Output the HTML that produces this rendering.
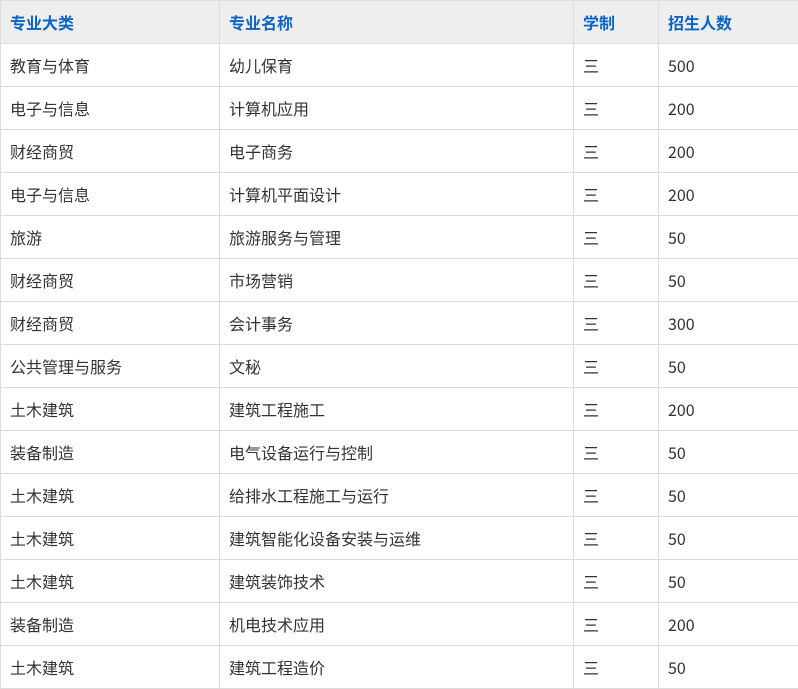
<!DOCTYPE html>
<html><head><meta charset="utf-8"><style>
body{margin:0;background:#fff;}
table{border-collapse:collapse;width:798px;table-layout:fixed;font-family:"Noto Sans CJK SC","Liberation Sans",sans-serif;font-size:16px;color:#333;}
td,th{border:1px solid #ddd;height:42px;padding:0 0 0 9px;text-align:left;vertical-align:middle;line-height:20px;}
th{background:#eee;color:#0a64c8;font-weight:bold;}
</style></head><body>
<table>
<colgroup><col style="width:219px"><col style="width:354px"><col style="width:85px"><col style="width:140px"></colgroup>
<tr><th>专业大类</th><th>专业名称</th><th>学制</th><th>招生人数</th></tr>
<tr><td>教育与体育</td><td>幼儿保育</td><td>三</td><td>500</td></tr>
<tr><td>电子与信息</td><td>计算机应用</td><td>三</td><td>200</td></tr>
<tr><td>财经商贸</td><td>电子商务</td><td>三</td><td>200</td></tr>
<tr><td>电子与信息</td><td>计算机平面设计</td><td>三</td><td>200</td></tr>
<tr><td>旅游</td><td>旅游服务与管理</td><td>三</td><td>50</td></tr>
<tr><td>财经商贸</td><td>市场营销</td><td>三</td><td>50</td></tr>
<tr><td>财经商贸</td><td>会计事务</td><td>三</td><td>300</td></tr>
<tr><td>公共管理与服务</td><td>文秘</td><td>三</td><td>50</td></tr>
<tr><td>土木建筑</td><td>建筑工程施工</td><td>三</td><td>200</td></tr>
<tr><td>装备制造</td><td>电气设备运行与控制</td><td>三</td><td>50</td></tr>
<tr><td>土木建筑</td><td>给排水工程施工与运行</td><td>三</td><td>50</td></tr>
<tr><td>土木建筑</td><td>建筑智能化设备安装与运维</td><td>三</td><td>50</td></tr>
<tr><td>土木建筑</td><td>建筑装饰技术</td><td>三</td><td>50</td></tr>
<tr><td>装备制造</td><td>机电技术应用</td><td>三</td><td>200</td></tr>
<tr><td>土木建筑</td><td>建筑工程造价</td><td>三</td><td>50</td></tr>
</table>
</body></html>
